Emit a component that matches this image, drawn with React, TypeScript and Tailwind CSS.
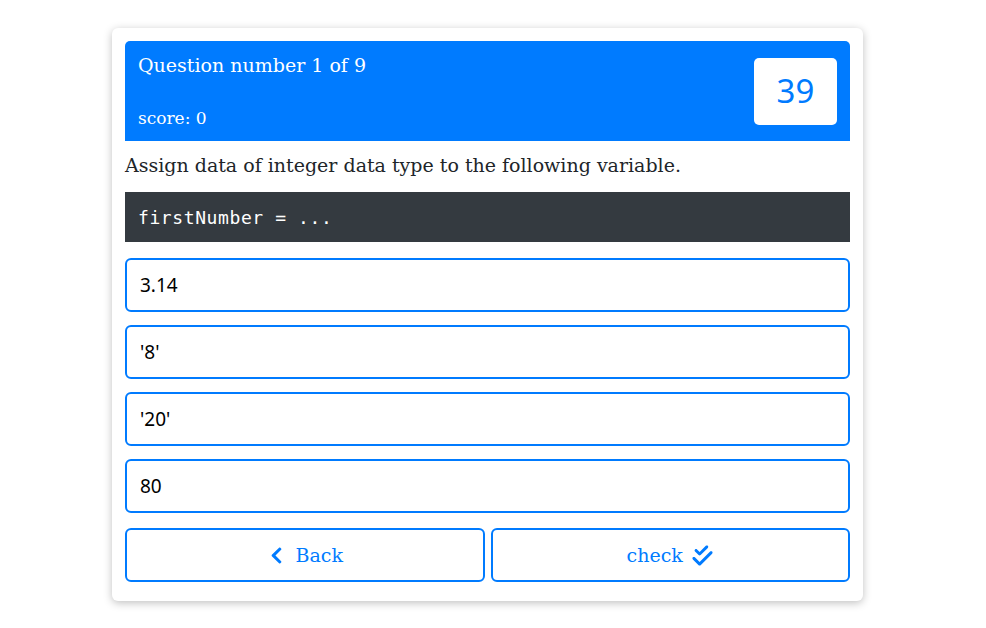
import React from "react";
import { FaCheckDouble } from "react-icons/fa6";
import { FaChevronLeft } from "react-icons/fa";

const serif = { fontFamily: '"DejaVu Serif", "Liberation Serif", serif' };

export default function App() {
  const options = ["3.14", "'8'", "'20'", "80"];
  return (
    <div className="w-[986px] h-[628px] bg-white pt-[28px] pl-[112px]">
      <div className="w-[751px] rounded-[6px] bg-white shadow-[0_2px_8px_rgba(0,0,0,0.25)] pt-[13px] px-[13px] pb-[19px] flex flex-col">
        <div className="h-[100px] bg-[#007bff] rounded-t-[5px] flex items-center justify-between pl-[13px] pr-[13px]">
          <div className="flex flex-col text-white h-full pt-[11px] pb-[12px] justify-between" style={serif}>
            <div className="text-[19px] leading-[26px]">Question number 1 of 9</div>
            <div className="text-[17px] leading-[22px]">score: 0</div>
          </div>
          <div
            className="w-[83px] h-[67px] bg-white rounded-[5px] flex items-center justify-center text-[#007bff] text-[33px]"
            style={{ fontFamily: '"Noto Sans", sans-serif' }}
          >
            39
          </div>
        </div>
        <div className="text-[19px] leading-[26px] text-[#212529] mt-[11px]" style={serif}>
          Assign data of integer data type to the following variable.
        </div>
        <div
          className="mt-[14px] h-[50px] bg-[#343a40] text-white text-[18px] tracking-[0.6px] flex items-center pl-[13px]"
          style={{ fontFamily: '"DejaVu Sans Mono", monospace' }}
        >
          firstNumber = ...
        </div>
        <div className="flex flex-col gap-[13px] mt-[16px]">
          {options.map((o) => (
            <div
              key={o}
              className="h-[54px] border-2 border-[#007bff] rounded-[6px] flex items-center pl-[13px] text-[19px] text-black"
              style={{ fontFamily: '"Noto Sans", sans-serif' }}
            >
              {o}
            </div>
          ))}
        </div>
        <div className="flex gap-[6px] mt-[15px]">
          <button
            className="flex-1 h-[54px] border-2 border-[#007bff] rounded-[6px] flex items-center justify-center gap-[10px] text-[#007bff] text-[19px]"
            style={serif}
          >
            <FaChevronLeft size={19} />
            <span>Back</span>
          </button>
          <button
            className="flex-1 h-[54px] border-2 border-[#007bff] rounded-[6px] flex items-center justify-center gap-[8px] text-[#007bff] text-[19px]"
            style={serif}
          >
            <span>check</span>
            <FaCheckDouble size={23} />
          </button>
        </div>
      </div>
    </div>
  );
}
